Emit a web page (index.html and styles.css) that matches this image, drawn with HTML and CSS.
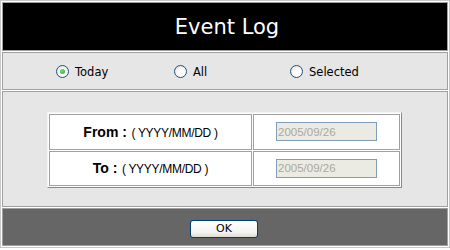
FILE: index.html
```html
<!DOCTYPE html>
<html lang="en">
<head>
  <meta charset="UTF-8" />
  <title>Event Log</title>
  <link rel="stylesheet" href="styles.css">
</head>
<body>
  <div class="dialog">
    <div class="title">Event Log</div>

    <div class="choices">
      <label class="choice"><input type="radio" name="range" checked> Today</label>
      <label class="choice"><input type="radio" name="range"> All</label>
      <label class="choice"><input type="radio" name="range"> Selected</label>
    </div>

    <div class="range">
      <table class="dates">
        <tr>
          <td class="label"><b>From :</b> <span class="fmt">( YYYY/MM/DD )</span></td>
          <td class="field"><input type="text" value="2005/09/26" disabled></td>
        </tr>
        <tr>
          <td class="label"><b>To :</b> <span class="fmt">( YYYY/MM/DD )</span></td>
          <td class="field"><input type="text" value="2005/09/26" disabled></td>
        </tr>
      </table>
    </div>

    <div class="actions">
      <button class="ok">OK</button>
    </div>
  </div>
</body>
</html>
```

FILE: styles.css
```css
* {
  box-sizing: border-box;
}

body {
  margin: 0;
  background: #fff;
  font-family: "DejaVu Sans", Verdana, sans-serif;
}

.dialog {
  width: 450px;
  border: 1px solid #c8c8c8;
  padding: 1px;
  display: flex;
  flex-direction: column;
  gap: 1px;
}

.dialog > div {
  border: 1px solid #a0a0a0;
}

.title {
  height: 49px;
  background: #000;
  color: #fff;
  font-size: 21px;
  display: flex;
  align-items: center;
  justify-content: center;
  padding-top: 1px;
  padding-left: 4px;
}

.choices {
  height: 38px;
  background: #e6e6e6;
  display: flex;
  align-items: center;
  padding-left: 53px;
  padding-top: 1px;
  font-size: 11.5px;
  color: #000;
}

.choice {
  width: 118px;
  display: flex;
  align-items: center;
  gap: 6px;
}

.choice:nth-child(2) {
  width: 116px;
}

.choice input {
  appearance: none;
  -webkit-appearance: none;
  margin: 0;
  width: 13px;
  height: 13px;
  border: 1px solid #1c5180;
  border-radius: 50%;
  background: radial-gradient(circle at 60% 65%, #fff 30%, #dcdcd6 100%);
  position: relative;
}

.choice input:checked::after {
  content: "";
  position: absolute;
  left: 3px;
  top: 3px;
  width: 5px;
  height: 5px;
  border-radius: 50%;
  background: radial-gradient(circle at 40% 40%, #7be07b, #21a121);
}

.range {
  height: 116px;
  background: #e6e6e6;
  display: flex;
  align-items: center;
  justify-content: center;
  padding-right: 1px;
  padding-top: 1px;
}

.dates {
  background: #fff;
  border: 1px solid;
  border-color: #f4f4f4 #888 #888 #f4f4f4;
  border-spacing: 1px;
  table-layout: fixed;
}

.dates td {
  border: 1px solid #a0a0a0;
  padding: 0;
  text-align: center;
}

.dates tr:first-child td {
  height: 36px;
}

.dates tr:last-child td {
  height: 35px;
}

.label {
  width: 203px;
  font-family: "Liberation Sans", Arial, sans-serif;
}

.label b {
  font-size: 14px;
}

.fmt {
  font-size: 12px;
  letter-spacing: -0.3px;
}

.field {
  width: 147px;
}

.field input {
  width: 101px;
  height: 19px;
  border: 1px solid #7f9db9;
  background: #ebebe4;
  color: #aca899;
  font-family: "Liberation Sans", Arial, sans-serif;
  font-size: 11.5px;
  padding: 0 1px;
  display: block;
  margin: 0 auto;
}

.actions {
  height: 38px;
  background: #666;
  display: flex;
  align-items: center;
  justify-content: center;
  padding-top: 3px;
  padding-right: 2px;
}

.ok {
  width: 68px;
  height: 18px;
  border: 1px solid #003c74;
  border-radius: 3px;
  background: linear-gradient(#fff, #f4f4f0 70%, #dedbd2);
  font-family: "DejaVu Sans", Verdana, sans-serif;
  font-size: 11px;
  color: #000;
  padding: 0;
}
```
